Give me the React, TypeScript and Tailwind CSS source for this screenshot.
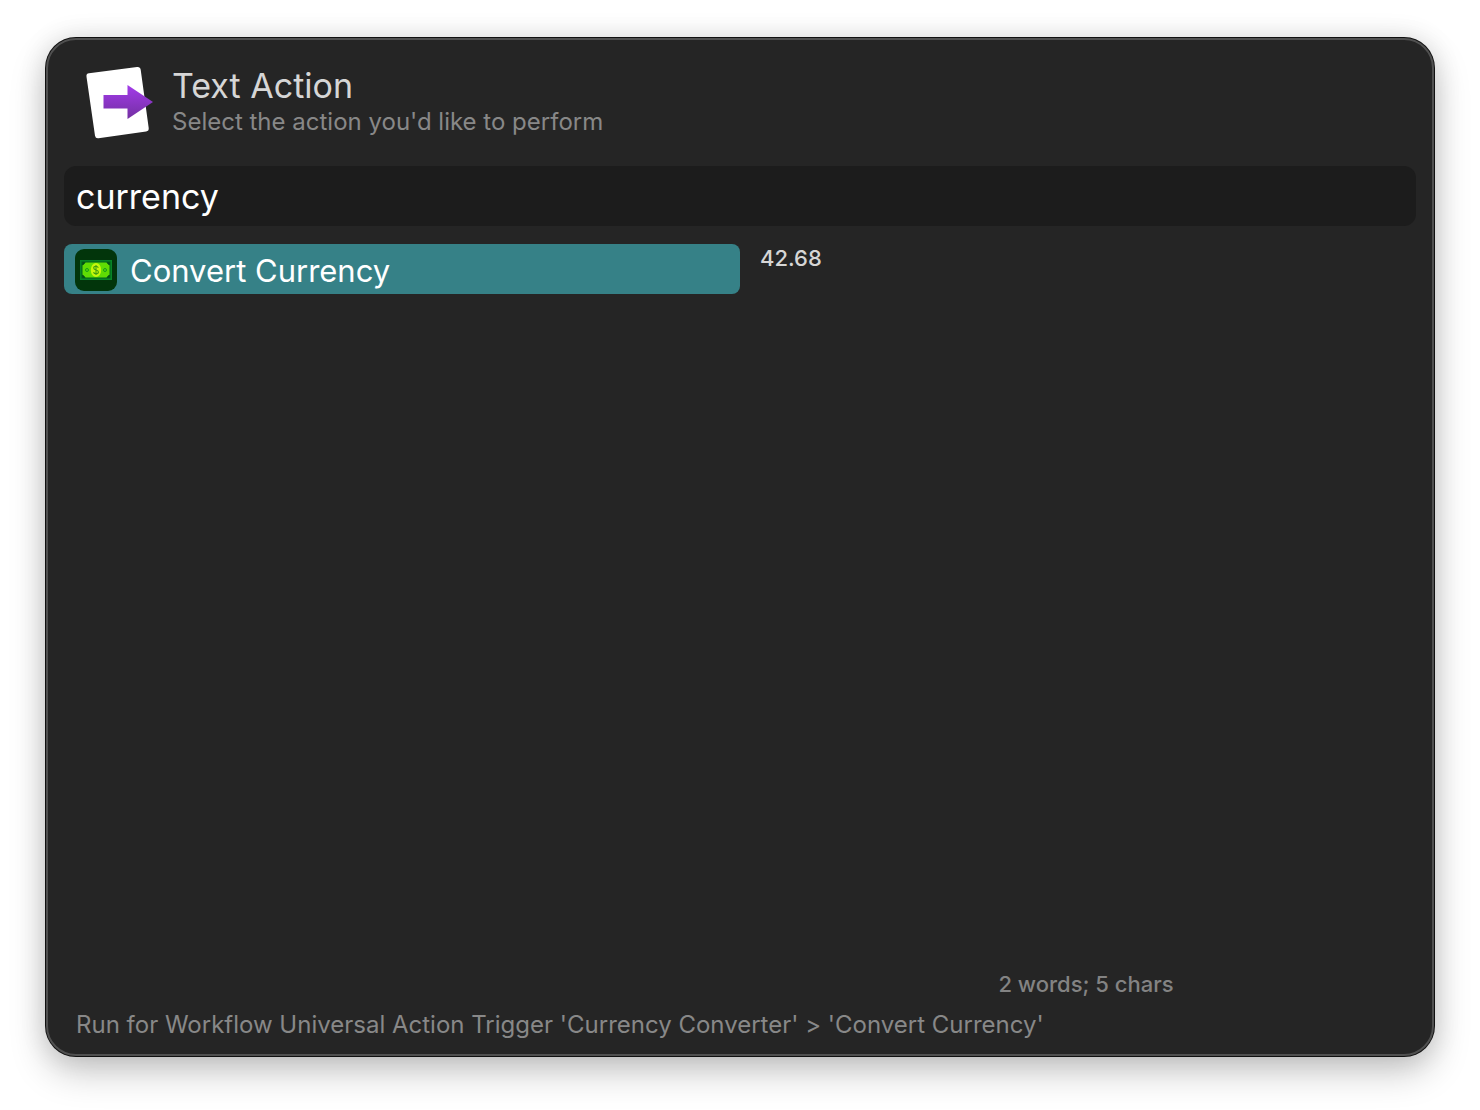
function ActionIcon() {
  return (
    <svg aria-hidden="true" className="h-20 w-20 shrink-0" viewBox="0 0 80 80">
      <defs>
        <linearGradient id="arrow" x1="0" y1="0" x2="0" y2="1">
          <stop offset="0" stopColor="#a33bea" />
          <stop offset="1" stopColor="#7330a2" />
        </linearGradient>
      </defs>
      <path
        d="M9 11.3 57 5Q60.2 4.6 60.7 7.7L68.700 66Q69.100 69 66.100 69.500L18.500 76.300Q15.500 76.700 15 73.700L6.500 14.800Q6 11.700 9 11.300Z"
        fill="#ffffff"
      />
      <path d="M23.500 33H47.500V23L73 40 47.500 57V46.500H23.500Z" fill="url(#arrow)" />
    </svg>
  );
}

function CurrencyIcon() {
  return (
    <svg aria-hidden="true" className="h-[42px] w-[42px] shrink-0" viewBox="0 0 42 42">
      <rect width="42" height="42" rx="9" fill="#02350b" />
      <rect x="5" y="11" width="32" height="20" fill="#078526" />
      <rect x="6.500" y="12.500" width="29" height="17" fill="#02611a" />
      <path d="M10.500 13.500H31.500L34.500 16.500V25.500L31.500 28.500H10.500L7.500 25.500V16.500Z" fill="#5fdc04" />
      <path d="M7.500 13.500H10.500L7.500 16.500ZM34.500 13.500H31.500L34.500 16.500ZM7.500 28.500H10.500L7.500 25.500ZM34.500 28.500H31.500L34.500 25.500Z" fill="#034d14" />
      <circle cx="12" cy="21" r="1.500" fill="none" stroke="#159a1c" />
      <circle cx="30" cy="21" r="1.500" fill="none" stroke="#159a1c" />
      <ellipse cx="21" cy="21" rx="5.200" ry="7" fill="#c6f70c" />
      <path
        d="M23.300 18.700C22.800 17.700 22 17.300 21 17.300C19.600 17.300 18.700 18 18.700 19.100C18.700 21.600 23.400 20.300 23.400 22.900C23.400 24 22.400 24.700 21 24.700C19.800 24.700 18.900 24.200 18.500 23.200M21 16V26"
        fill="none"
        stroke="#3f9f10"
        strokeWidth="1.100"
      />
    </svg>
  );
}

export default function App() {
  return (
    <div className="flex min-h-screen flex-col bg-white px-[46px] pt-[38px] pb-[54px] font-['Inter',sans-serif]">
      <main className="flex flex-1 flex-col rounded-[30px] border-2 border-[#505050] bg-[#252525] px-4 pb-[11px] shadow-[0_0_0_1px_#101010,0_16px_36px_rgba(0,0,0,0.22),0_0_28px_rgba(0,0,0,0.12)]">
        <header className="flex items-center gap-3 pt-[22px] pb-6 pl-4">
          <ActionIcon />
          <div>
            <h1 className="text-[34px] leading-10 text-[#d6d6d6]">Text Action</h1>
            <p className="text-[24px] leading-8 text-[#888888]">Select the action you'd like to perform</p>
          </div>
        </header>

        <input
          type="text"
          aria-label="Filter actions"
          defaultValue="currency"
          className="h-[60px] w-full rounded-xl bg-[#1c1c1c] px-3 text-[34px] text-white outline-none"
        />

        <div className="mt-[18px] grid flex-1 grid-cols-2">
          <ul>
            <li>
              <button
                type="button"
                className="flex h-[50px] w-full items-center gap-[13px] rounded-lg bg-[#368187] px-[11px] pt-0.5 text-left text-[31px] text-white"
              >
                <CurrencyIcon />
                <span className="pt-0.5">Convert Currency</span>
              </button>
            </li>
          </ul>
          <section aria-label="Preview" className="ml-4 flex flex-col justify-between">
            <p className="pl-1 text-[22px] leading-7 font-medium text-[#d6d6d6]">42.68</p>
            <p className="text-center text-[22px] leading-7 font-medium text-[#838383]">2 words; 5 chars</p>
          </section>
        </div>

        <footer className="mt-[9px] px-3 text-[24px] leading-9 text-[#888888]">
          Run for Workflow Universal Action Trigger 'Currency Converter' &gt; 'Convert Currency'
        </footer>
      </main>
    </div>
  );
}
